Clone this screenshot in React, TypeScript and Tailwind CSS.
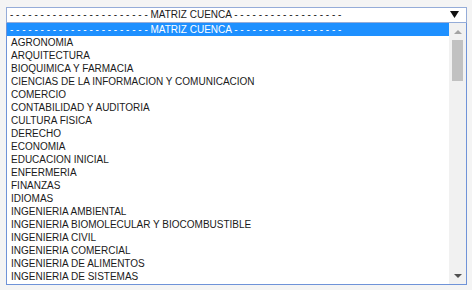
import React from "react"

const dashes = (n: number) => Array.from({ length: n }, () => "-").join(" ")
const header = `${dashes(23)} MATRIZ CUENCA ${dashes(18)}`

const careers = [
  "AGRONOMIA",
  "ARQUITECTURA",
  "BIOQUIMICA Y FARMACIA",
  "CIENCIAS DE LA INFORMACION Y COMUNICACION",
  "COMERCIO",
  "CONTABILIDAD Y AUDITORIA",
  "CULTURA FISICA",
  "DERECHO",
  "ECONOMIA",
  "EDUCACION INICIAL",
  "ENFERMERIA",
  "FINANZAS",
  "IDIOMAS",
  "INGENIERIA AMBIENTAL",
  "INGENIERIA BIOMOLECULAR Y BIOCOMBUSTIBLE",
  "INGENIERIA CIVIL",
  "INGENIERIA COMERCIAL",
  "INGENIERIA DE ALIMENTOS",
  "INGENIERIA DE SISTEMAS",
]

export default function App() {
  return (
    <div
      className="w-[472px] h-[290px] bg-[#f4f4f4] pl-[6px] pt-[7px] text-[10px] text-[#1a1a1a]"
      style={{ fontFamily: '"Liberation Sans", Arial, sans-serif' }}
    >
      {/* closed select */}
      <div className="w-[461px] h-[16px] bg-white border border-[#95acd8] flex items-center pl-[3px] pr-[7px]">
        <span className="flex-1 whitespace-nowrap leading-[14px]">{header}</span>
        <svg width="9" height="7" viewBox="0 0 9 7" className="mb-[1px]">
          <path d="M0 0h9L4.5 7z" fill="#111" />
        </svg>
      </div>

      {/* open list */}
      <div className="w-[461px] h-[262px] bg-white border border-t-0 border-[#6f93d8] flex overflow-hidden">
        <div className="flex-1 overflow-hidden">
          <div className="h-[13px] leading-[13px] bg-[#1e90ff] text-white pl-[3px] whitespace-nowrap">
            {header}
          </div>
          {careers.map((c) => (
            <div key={c} className="h-[13px] leading-[13px] pl-[4px] whitespace-nowrap">
              {c}
            </div>
          ))}
        </div>

        {/* scrollbar */}
        <div className="w-[17px] bg-[#f1f1f1] flex flex-col items-center">
          <div className="h-[17px] flex items-center justify-center">
            <svg width="8" height="4" viewBox="0 0 8 4">
              <path d="M4 0L8 4H0z" fill="#a3a3a3" />
            </svg>
          </div>
          <div className="w-[11px] h-[41px] bg-[#c1c1c1]" />
          <div className="flex-1" />
          <div className="h-[17px] flex items-center justify-center">
            <svg width="8" height="4" viewBox="0 0 8 4">
              <path d="M0 0H8L4 4z" fill="#505050" />
            </svg>
          </div>
        </div>
      </div>
    </div>
  )
}
